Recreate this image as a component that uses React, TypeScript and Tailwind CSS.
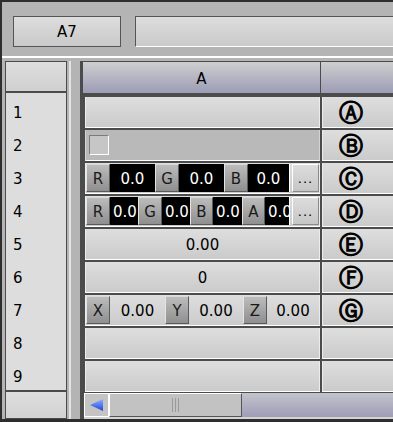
import React from 'react';

const cellA = 'w-[235px] h-[31px] border-b border-x border-b-white border-x-[#ececec] bg-gradient-to-b from-[#dedede] to-[#cbcbcb]';
const cellB = 'flex-1 ml-[2px] h-[31px] border-b border-l border-b-white border-l-[#ececec] bg-gradient-to-b from-[#dedede] to-[#cbcbcb] flex items-center pl-[16px] pt-[2px]';

function Tag({ label, w }: { label: string; w: string }) {
  return (
    <div className={`${w} shrink-0 flex items-center justify-center pt-[2px] bg-gradient-to-b from-[#bcbcbc] to-[#8f8f8f] border-l border-t border-l-[#e4e4e4] border-t-[#d8d8d8] border-r border-b border-r-[#5a5a5a] border-b-[#5a5a5a] text-[#1a1a1a]`}>
      {label}
    </div>
  );
}

function Dark({ w, center, last }: { w: string; center?: boolean; last?: boolean }) {
  return (
    <div
      className={`${w} shrink-0 overflow-hidden whitespace-nowrap bg-black text-white flex items-center pt-[2px] ${center ? 'justify-center' : 'pl-[3px]'} ${last ? 'border-r border-white' : ''}`}
    >
      0.0
    </div>
  );
}

function More() {
  return (
    <div className="w-[27px] ml-[2px] shrink-0 flex items-center justify-center bg-gradient-to-b from-[#dcdcdc] to-[#c6c6c6] border border-t-white border-l-white border-r-[#8a8a8a] border-b-[#8a8a8a] text-[13px] tracking-[1px] pt-[2px]">
      ...
    </div>
  );
}

function Circled({ ch }: { ch: string }) {
  return (
    <span className="font-['DejaVu_Sans',sans-serif] font-normal text-[24px] leading-none [-webkit-text-stroke:1.1px_black]">
      {ch}
    </span>
  );
}

function Row({ children, b, dim }: { children?: React.ReactNode; b?: string; dim?: boolean }) {
  return (
    <div className="h-[33px] pt-[2px] flex shrink-0">
      <div className={`ml-[2px] ${dim ? 'w-[235px] h-[31px] border-b border-x border-b-white border-x-[#d4d4d4] bg-[#b9b9b9]' : cellA} flex items-stretch overflow-hidden`}>
        {children}
      </div>
      <div className={cellB}>{b && <Circled ch={b} />}</div>
    </div>
  );
}

export default function App() {
  return (
    <div className="w-[393px] h-[422px] overflow-hidden bg-[#b4b4b4] border-t-2 border-l-2 border-b-[3px] border-[#2e2e2e] flex flex-col font-['DejaVu_Sans',sans-serif] text-[15px] text-black">
      {/* toolbar */}
      <div className="h-[56px] shrink-0 flex items-start pt-[14px] border-b-2 border-white">
        <div className="ml-[11px] w-[108px] h-[31px] flex items-center justify-center pt-[1px] border border-[#555] bg-gradient-to-b from-[#dddddd] to-[#c9c9c9]">
          A7
        </div>
        <div className="ml-[14px] flex-1 h-[31px] border-t border-l border-[#555] border-b border-b-white bg-gradient-to-b from-[#dddddd] to-[#cacaca]" />
      </div>

      {/* sheet */}
      <div className="flex-1 flex pt-[3px] min-h-0">
        {/* row header */}
        <div className="ml-[3px] w-[62px] flex flex-col border border-[#4b4b4b] bg-[#dddddd]">
          <div className="h-[31px] shrink-0 bg-gradient-to-b from-[#dedede] to-[#d0d0d0] border-b-2 border-[#4b4b4b]" />
          <div className="h-[297px] shrink-0 flex flex-col pt-[4px]">
            {[1, 2, 3, 4, 5, 6, 7, 8, 9].map((n) => (
              <div key={n} className="h-[33px] shrink-0 flex items-center pl-[7px]">
                {n}
              </div>
            ))}
          </div>
          <div className="flex-1 border-t-2 border-[#4b4b4b] bg-gradient-to-b from-[#dedede] to-[#d2d2d2]" />
        </div>

        {/* splitter */}
        <div className="w-[13px] shrink-0 flex">
          <div className="ml-[2px] w-[2px] bg-[#e4e4e4]" />
        </div>

        {/* grid */}
        <div className="flex-1 flex flex-col border-l-[3px] border-t border-[#4b4b4b] bg-[#4b4b4b] min-w-0">
          <div className="h-[31px] shrink-0 flex mb-[2px]">
            <div className="w-[237px] flex items-center justify-center pt-[4px] bg-gradient-to-b from-[#cfcfcf] to-[#9c9cb6]">A</div>
            <div className="flex-1 ml-[1px] bg-gradient-to-b from-[#cfcfcf] to-[#9c9cb6]" />
          </div>

          <Row b="Ⓐ" />
          <Row b="Ⓑ" dim>
            <div className="ml-[3px] mt-[5px] w-[20px] h-[20px] border border-t-[#7c7c7c] border-l-[#7c7c7c] border-r-white border-b-white bg-[#c6c6c6]" />
          </Row>
          <Row b="Ⓒ">
            <div className="flex flex-1 py-[1px]">
              <Tag label="R" w="w-[24px]" />
              <Dark w="w-[45px]" center />
              <Tag label="G" w="w-[24px]" />
              <Dark w="w-[45px]" center />
              <Tag label="B" w="w-[24px]" />
              <Dark w="w-[42px]" center last />
              <More />
            </div>
          </Row>
          <Row b="Ⓓ">
            <div className="flex flex-1 py-[1px]">
              <Tag label="R" w="w-[24px]" />
              <Dark w="w-[28px]" />
              <Tag label="G" w="w-[24px]" />
              <Dark w="w-[28px]" />
              <Tag label="B" w="w-[23px]" />
              <Dark w="w-[29px]" />
              <Tag label="A" w="w-[23px]" />
              <Dark w="w-[25px]" last />
              <More />
            </div>
          </Row>
          <Row b="Ⓔ">
            <div className="flex-1 flex items-center justify-center pt-[2px]">0.00</div>
          </Row>
          <Row b="Ⓕ">
            <div className="flex-1 flex items-center justify-center pt-[2px]">0</div>
          </Row>
          <Row b="Ⓖ">
            <div className="flex flex-1 py-[1px]">
              <Tag label="X" w="w-[24px]" />
              <div className="w-[55px] flex items-center justify-center pt-[2px]">0.00</div>
              <Tag label="Y" w="w-[24px]" />
              <div className="w-[54px] flex items-center justify-center pt-[2px]">0.00</div>
              <Tag label="Z" w="w-[24px]" />
              <div className="w-[52px] flex items-center justify-center pt-[2px]">0.00</div>
            </div>
          </Row>
          <Row />
          <Row />

          {/* horizontal scrollbar */}
          <div className="flex-1 flex pt-[1px] pl-[1px] bg-[#4b4b4b]">
            <div className="flex-1 flex bg-[#d4d4d4] pb-[2px]">
              <div className="w-[25px] flex items-center justify-center border border-white bg-[#c4c4c4]">
                <svg width="14" height="12" viewBox="0 0 14 12">
                  <defs>
                    <linearGradient id="arr" x1="0" y1="0" x2="0" y2="1">
                      <stop offset="0" stopColor="#8fb0ff" />
                      <stop offset="1" stopColor="#1f44d8" />
                    </linearGradient>
                  </defs>
                  <polygon points="0,6 13,0 13,12" fill="url(#arr)" />
                </svg>
              </div>
              <div className="w-[133px] flex items-center justify-center border border-t-white border-l-white border-r-[#555] border-b-[#555] bg-[#c2c2c2]">
                <div className="flex gap-[2px] h-[14px]">
                  <div className="w-[1px] bg-[#9a9a9a]" />
                  <div className="w-[1px] bg-[#9a9a9a]" />
                  <div className="w-[1px] bg-[#9a9a9a]" />
                </div>
              </div>
              <div className="flex-1 bg-gradient-to-b from-[#c4c4cc] to-[#9d9db8]" />
            </div>
          </div>
        </div>
      </div>
    </div>
  );
}
